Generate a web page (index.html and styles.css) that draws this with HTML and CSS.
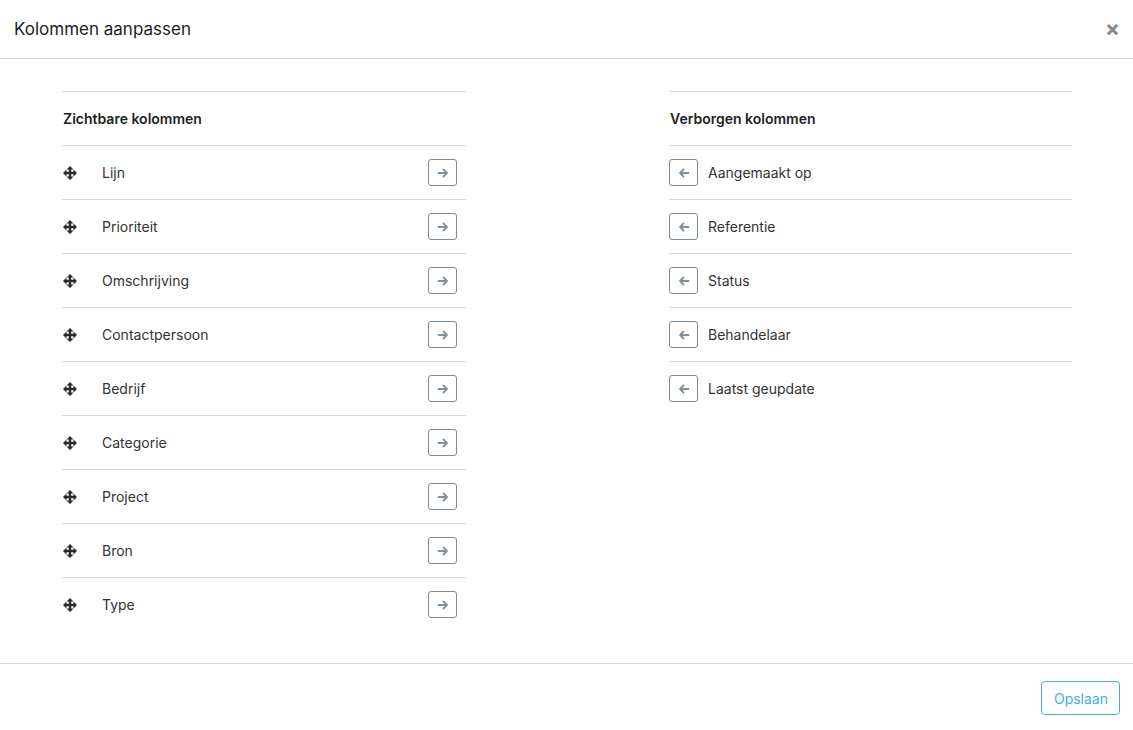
FILE: index.html
```html
<!DOCTYPE html>
<html lang="nl">
<head>
  <meta charset="UTF-8">
  <meta name="viewport" content="width=device-width, initial-scale=1.0">
  <title>Kolommen aanpassen</title>
  <link rel="stylesheet" href="styles.css">
</head>
<body>
  <div class="modal">
    <div class="modal-header">
      <h1>Kolommen aanpassen</h1>
      <button class="close">&times;</button>
    </div>

    <div class="modal-body">
      <div class="col-list">
        <div class="col-title">Zichtbare kolommen</div>
        <div class="col-row"><svg class="move" viewBox="0 0 12 12"><path d="M6 0L9 3H7V5H9V3L12 6L9 9V7H7V9H9L6 12L3 9H5V7H3V9L0 6L3 3V5H5V3H3Z"/></svg><span class="label">Lijn</span><button class="arrow-btn"><svg viewBox="0 0 12 12"><path d="M1.5 6H10M6.5 2.5L10 6L6.5 9.5"/></svg></button></div>
        <div class="col-row"><svg class="move" viewBox="0 0 12 12"><path d="M6 0L9 3H7V5H9V3L12 6L9 9V7H7V9H9L6 12L3 9H5V7H3V9L0 6L3 3V5H5V3H3Z"/></svg><span class="label">Prioriteit</span><button class="arrow-btn"><svg viewBox="0 0 12 12"><path d="M1.5 6H10M6.5 2.5L10 6L6.5 9.5"/></svg></button></div>
        <div class="col-row"><svg class="move" viewBox="0 0 12 12"><path d="M6 0L9 3H7V5H9V3L12 6L9 9V7H7V9H9L6 12L3 9H5V7H3V9L0 6L3 3V5H5V3H3Z"/></svg><span class="label">Omschrijving</span><button class="arrow-btn"><svg viewBox="0 0 12 12"><path d="M1.5 6H10M6.5 2.5L10 6L6.5 9.5"/></svg></button></div>
        <div class="col-row"><svg class="move" viewBox="0 0 12 12"><path d="M6 0L9 3H7V5H9V3L12 6L9 9V7H7V9H9L6 12L3 9H5V7H3V9L0 6L3 3V5H5V3H3Z"/></svg><span class="label">Contactpersoon</span><button class="arrow-btn"><svg viewBox="0 0 12 12"><path d="M1.5 6H10M6.5 2.5L10 6L6.5 9.5"/></svg></button></div>
        <div class="col-row"><svg class="move" viewBox="0 0 12 12"><path d="M6 0L9 3H7V5H9V3L12 6L9 9V7H7V9H9L6 12L3 9H5V7H3V9L0 6L3 3V5H5V3H3Z"/></svg><span class="label">Bedrijf</span><button class="arrow-btn"><svg viewBox="0 0 12 12"><path d="M1.5 6H10M6.5 2.5L10 6L6.5 9.5"/></svg></button></div>
        <div class="col-row"><svg class="move" viewBox="0 0 12 12"><path d="M6 0L9 3H7V5H9V3L12 6L9 9V7H7V9H9L6 12L3 9H5V7H3V9L0 6L3 3V5H5V3H3Z"/></svg><span class="label">Categorie</span><button class="arrow-btn"><svg viewBox="0 0 12 12"><path d="M1.5 6H10M6.5 2.5L10 6L6.5 9.5"/></svg></button></div>
        <div class="col-row"><svg class="move" viewBox="0 0 12 12"><path d="M6 0L9 3H7V5H9V3L12 6L9 9V7H7V9H9L6 12L3 9H5V7H3V9L0 6L3 3V5H5V3H3Z"/></svg><span class="label">Project</span><button class="arrow-btn"><svg viewBox="0 0 12 12"><path d="M1.5 6H10M6.5 2.5L10 6L6.5 9.5"/></svg></button></div>
        <div class="col-row"><svg class="move" viewBox="0 0 12 12"><path d="M6 0L9 3H7V5H9V3L12 6L9 9V7H7V9H9L6 12L3 9H5V7H3V9L0 6L3 3V5H5V3H3Z"/></svg><span class="label">Bron</span><button class="arrow-btn"><svg viewBox="0 0 12 12"><path d="M1.5 6H10M6.5 2.5L10 6L6.5 9.5"/></svg></button></div>
        <div class="col-row"><svg class="move" viewBox="0 0 12 12"><path d="M6 0L9 3H7V5H9V3L12 6L9 9V7H7V9H9L6 12L3 9H5V7H3V9L0 6L3 3V5H5V3H3Z"/></svg><span class="label">Type</span><button class="arrow-btn"><svg viewBox="0 0 12 12"><path d="M1.5 6H10M6.5 2.5L10 6L6.5 9.5"/></svg></button></div>
      </div>

      <div class="col-list">
        <div class="col-title">Verborgen kolommen</div>
        <div class="col-row hidden-row"><button class="arrow-btn"><svg viewBox="0 0 12 12"><path d="M10.5 6H2M5.5 2.5L2 6L5.5 9.5"/></svg></button><span class="label">Aangemaakt op</span></div>
        <div class="col-row hidden-row"><button class="arrow-btn"><svg viewBox="0 0 12 12"><path d="M10.5 6H2M5.5 2.5L2 6L5.5 9.5"/></svg></button><span class="label">Referentie</span></div>
        <div class="col-row hidden-row"><button class="arrow-btn"><svg viewBox="0 0 12 12"><path d="M10.5 6H2M5.5 2.5L2 6L5.5 9.5"/></svg></button><span class="label">Status</span></div>
        <div class="col-row hidden-row"><button class="arrow-btn"><svg viewBox="0 0 12 12"><path d="M10.5 6H2M5.5 2.5L2 6L5.5 9.5"/></svg></button><span class="label">Behandelaar</span></div>
        <div class="col-row hidden-row"><button class="arrow-btn"><svg viewBox="0 0 12 12"><path d="M10.5 6H2M5.5 2.5L2 6L5.5 9.5"/></svg></button><span class="label">Laatst geupdate</span></div>
      </div>
    </div>

    <div class="modal-footer">
      <button class="save-btn">Opslaan</button>
    </div>
  </div>
</body>
</html>
```

FILE: styles.css
```css
body {
  margin: 0;
  font-family: Inter, "Noto Sans", sans-serif;
  background-color: #fff;
  color: #333;
}
.modal {
  width: 1133px;
  height: 730px;
  display: flex;
  flex-direction: column;
}
.modal-header {
  height: 58px;
  border-bottom: 1px solid #d6d6d6;
  display: flex;
  align-items: center;
  justify-content: space-between;
  padding: 0 14px;
}
.modal-header h1 {
  margin: 0;
  font-size: 17px;
  font-weight: 400;
  color: #222;
}
.close {
  border: none;
  background: none;
  font-family: Inter, sans-serif;
  font-size: 22px;
  font-weight: 700;
  color: #888;
  padding: 0;
  line-height: 1;
  margin-right: -1px;
  margin-top: -2px;
}
.modal-body {
  flex: 1;
  display: grid;
  grid-template-columns: 404px 403px;
  justify-content: space-between;
  align-items: start;
  padding: 32px 61px 0 62px;
}
.col-list {
  border-top: 1px solid #d6d6d6;
}
.col-title {
  height: 53px;
  display: flex;
  align-items: center;
  padding-left: 1px;
  font-size: 14px;
  font-weight: 600;
  color: #222;
  border-bottom: 1px solid #d6d6d6;
}
.col-row {
  height: 53px;
  display: flex;
  align-items: center;
  font-size: 14px;
  border-bottom: 1px solid #d6d6d6;
}
.col-row:last-child {
  border-bottom: none;
}
.move {
  width: 14px;
  height: 14px;
  fill: #2a2a2a;
  margin-left: 1px;
  margin-right: 25px;
}
.label {
  flex: 1;
  color: #333;
}
.arrow-btn {
  width: 29px;
  height: 27px;
  border: 1px solid #7b8a97;
  border-radius: 3px;
  background: #fff;
  display: flex;
  align-items: center;
  justify-content: center;
  padding: 0;
  margin-right: 9px;
}
.arrow-btn svg {
  width: 12px;
  height: 12px;
  fill: none;
  stroke: #82909d;
  stroke-width: 1.8;
  stroke-linecap: round;
  stroke-linejoin: round;
}
.hidden-row .arrow-btn {
  margin-right: 10px;
}
.modal-footer {
  height: 66px;
  border-top: 1px solid #d6d6d6;
  display: flex;
  align-items: center;
  justify-content: flex-end;
  padding: 0 13px;
}
.save-btn {
  height: 34px;
  padding: 0 11px 0 12px;
  font-family: Inter, sans-serif;
  font-size: 14px;
  color: #43aee0;
  background: #fff;
  border: 1px solid #43aee0;
  border-radius: 4px;
  margin-top: 2px;
}
```
